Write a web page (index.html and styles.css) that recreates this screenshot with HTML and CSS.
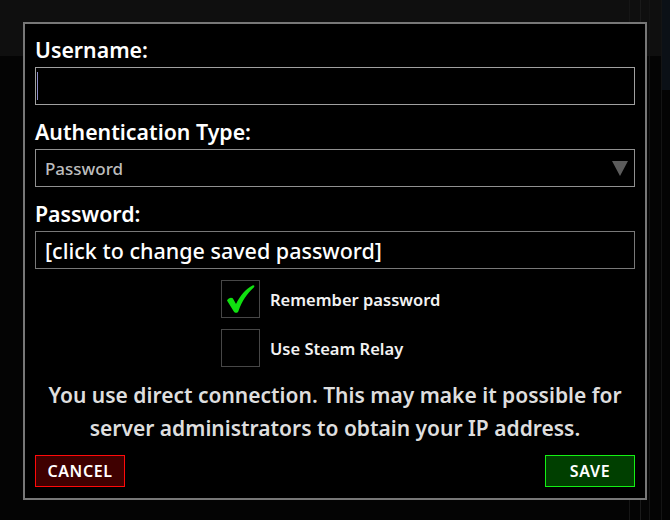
FILE: index.html
```html
<!DOCTYPE html>
<html lang="en">
<head>
<meta charset="utf-8">
<title>Server login</title>
<link rel="stylesheet" href="styles.css">
</head>
<body>
<div class="backdrop">
  <div class="dialog">
    <div class="label first">Username:</div>
    <div class="field field-user"><span class="caret"></span></div>

    <div class="label">Authentication Type:</div>
    <div class="field field-select">
      <span class="select-value">Password</span>
      <svg class="arrow" width="16" height="15" viewBox="0 0 16 15"><path d="M0 0 H16 L8 15 Z" fill="#5c5c5c"/></svg>
    </div>

    <div class="label">Password:</div>
    <div class="field field-pass">[click to change saved password]</div>

    <div class="checks">
      <div class="check-row">
        <div class="box">
          <svg width="30" height="30" viewBox="0 0 30 30">
            <path d="M1 16.5 C2.5 14 5 13 6.8 14.3 L10 20 C14 12 19.5 5 26.5 1.5 C28 1 29 2 28 3.2 C21 9.5 16 17 12.4 27.2 C11.6 29.2 8.8 29.2 7.8 27.4 Z" fill="#10e010"/>
          </svg>
        </div>
        <span class="check-label">Remember password</span>
      </div>
      <div class="check-row">
        <div class="box"></div>
        <span class="check-label">Use Steam Relay</span>
      </div>
    </div>

    <p class="note">You use direct connection. This may make it possible for server administrators to obtain your IP address.</p>

    <div class="buttons">
      <button class="btn btn-cancel">CANCEL</button>
      <button class="btn btn-save">SAVE</button>
    </div>
  </div>
</div>
</body>
</html>
```

FILE: styles.css
```css
html, body {
  margin: 0;
  padding: 0;
}

body {
  width: 670px;
  height: 520px;
  overflow: hidden;
  font-family: "Noto Sans", "Open Sans", sans-serif;
  color: #fff;
  background:
    linear-gradient(to right, transparent 662px, #0b1016 662px) 0 0 / 100% 90px no-repeat,
    linear-gradient(to right,
      transparent 629px, #161616 629px, #161616 630px,
      transparent 630px, transparent 640px, #1a1a1a 640px, #1a1a1a 641px,
      transparent 641px, transparent 649px, #141414 649px, #141414 650px,
      transparent 650px, transparent 661px, #141414 661px, #141414 662px,
      transparent 662px),
    linear-gradient(to bottom, #0f0f0f 0, #0f0f0f 56px, #040404 56px);
}

.backdrop {
  padding: 22px 0 0 23px;
}

.dialog {
  box-sizing: border-box;
  width: 624px;
  border: 2px solid #777;
  background: #000;
  padding: 11px 10px 11px 10px;
  display: flex;
  flex-direction: column;
}

.label {
  font-size: 21.3px;
  font-weight: 600;
  line-height: 30px;
  margin: 12px 0 2px;
  color: #fff;
}

.label.first {
  margin-top: 0;
}

.field {
  box-sizing: border-box;
  height: 38px;
  border: 1px solid #a0a0a0;
  display: flex;
  align-items: center;
  padding: 0 9px;
}

.field-user {
  padding: 0 1px;
}

.caret {
  width: 1px;
  height: 28px;
  background: #8d8dc8;
}

.field-select {
  border-color: #909090;
  justify-content: space-between;
  padding-right: 6px;
}

.select-value {
  font-size: 17px;
  font-weight: 500;
  color: #bdbdbd;
}

.arrow {
  display: block;
}

.field-pass {
  border-color: #787878;
  font-size: 21.5px;
  font-weight: 500;
  color: #fff;
}

.checks {
  width: 228px;
  margin: 11px auto 0;
  display: flex;
  flex-direction: column;
  gap: 11px;
}

.check-row {
  display: flex;
  align-items: center;
  gap: 10px;
}

.box {
  box-sizing: border-box;
  width: 39px;
  height: 38px;
  border: 1px solid #474747;
  display: flex;
  align-items: center;
  justify-content: center;
  padding-left: 1px;
}

.box svg {
  display: block;
}

.check-label {
  font-size: 16.5px;
  font-weight: 600;
  color: #f2f2f2;
}

.note {
  margin: 12px 0 0;
  font-size: 21px;
  font-weight: 600;
  line-height: 32.5px;
  text-align: center;
  color: #dedede;
}

.buttons {
  margin-top: 11px;
  display: flex;
  justify-content: space-between;
}

.btn {
  box-sizing: border-box;
  width: 90px;
  height: 32px;
  font-family: "Noto Sans", "Open Sans", sans-serif;
  font-size: 16px;
  font-weight: 600;
  color: #fff;
  padding: 0;
  letter-spacing: 0.6px;
}

.btn-cancel {
  background: #3f0000;
  border: 1px solid #ff0a0a;
}

.btn-save {
  background: #003f00;
  border: 1px solid #14f014;
}
```
